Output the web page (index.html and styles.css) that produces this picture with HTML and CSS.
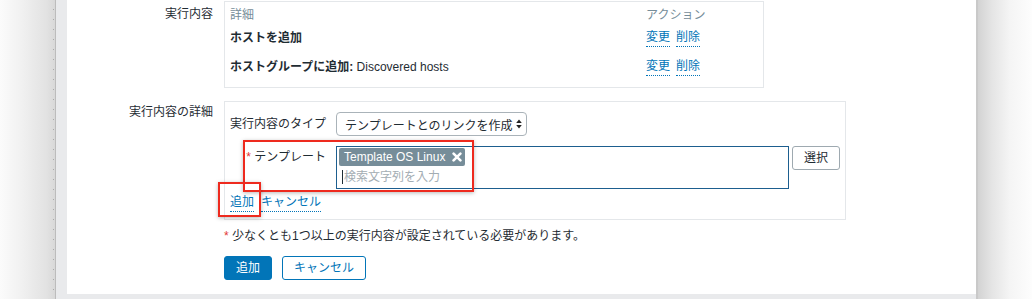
FILE: index.html
```html
<!DOCTYPE html>
<html lang="ja">
<head>
<meta charset="utf-8">
<title>実行内容</title>
<link rel="stylesheet" href="styles.css">
</head>
<body>
<div class="screen">
  <div class="shadow-left"></div>
  <div class="window">
    <div class="panel">
      <div class="form-row row-ops">
        <div class="label label-ops">実行内容</div>
        <div class="ops-box">
          <div class="ops-head">
            <span class="col-detail">詳細</span>
            <span class="col-action">アクション</span>
          </div>
          <div class="ops-row">
            <span class="col-detail"><b>ホストを追加</b></span>
            <span class="col-action"><a class="link" href="#">変更</a><a class="link" href="#">削除</a></span>
          </div>
          <div class="ops-row last">
            <span class="col-detail"><b>ホストグループに追加:</b> Discovered hosts</span>
            <span class="col-action"><a class="link" href="#">変更</a><a class="link" href="#">削除</a></span>
          </div>
        </div>
      </div>

      <div class="form-row row-detail">
        <div class="label label-detail">実行内容の詳細</div>
        <div class="detail-box">
          <div class="drow">
            <div class="dlabel">実行内容のタイプ</div>
            <div class="select">
              <span>テンプレートとのリンクを作成</span>
              <svg class="arrows" width="6" height="10" viewBox="0 0 6 10"><path d="M3 0.5 L5.8 4 L0.2 4 Z M3 9.5 L5.8 6 L0.2 6 Z" fill="#222"/></svg>
            </div>
          </div>
          <div class="drow tpl">
            <div class="dlabel"><span class="ast">*</span> テンプレート</div>
            <div class="ms">
              <span class="tag">Template OS Linux<svg class="tag-x" width="10" height="10" viewBox="0 0 10 10"><path d="M1.6 1.6 L8.4 8.4 M8.4 1.6 L1.6 8.4" stroke="#fff" stroke-width="2.6" stroke-linecap="round"/></svg></span>
              <div class="ms-input"><span class="caret"></span><span class="placeholder">検索文字列を入力</span></div>
            </div>
            <button class="btn-grey" type="button">選択</button>
          </div>
          <div class="dlinks">
            <a class="link" href="#">追加</a><a class="link" href="#">キャンセル</a>
          </div>
        </div>
      </div>

      <div class="form-row row-note">
        <div class="label"></div>
        <div class="note"><span class="ast">*</span> 少なくとも1つ以上の実行内容が設定されている必要があります。</div>
      </div>

      <div class="form-row row-buttons">
        <div class="label"></div>
        <div class="buttons">
          <button class="btn btn-primary" type="button">追加</button>
          <button class="btn btn-alt" type="button">キャンセル</button>
        </div>
      </div>

      <div class="annot annot-tpl"></div>
      <div class="annot annot-add"></div>
    </div>
  </div>
  <div class="shadow-right"></div>
</div>
</body>
</html>
```

FILE: styles.css
```css
* { box-sizing: border-box; }
html, body { margin: 0; padding: 0; }
body {
  width: 1032px;
  height: 299px;
  overflow: hidden;
  background: #fff;
  font-family: "Liberation Sans", "Noto Sans CJK JP", sans-serif;
  font-size: 12px;
  color: #1f2c33;
}
.screen { display: flex; height: 299px; }

.shadow-left {
  width: 55px;
  position: relative;
  background: linear-gradient(to right, #fbfbfb 0, #f2f2f2 35%, #e2e2e2 85%, #d8d8d8 100%);
}
.shadow-left::after {
  content: "";
  position: absolute;
  right: 1px;
  top: 0;
  bottom: 0;
  width: 1px;
  background: repeating-linear-gradient(to bottom, transparent 0 9px, #a9a9a9 9px 10px);
}
.shadow-right {
  width: 54px;
  background: linear-gradient(to right, #d3d3d3 0, #e4e4e4 25%, #f5f5f5 60%, #fdfdfd 100%);
}
.window {
  width: 923px;
  display: flex;
  flex-direction: column;
  background: #e9eaec;
  border-left: 1px solid #bcbcbc;
  border-right: 2px solid #c9c9c9;
  padding-left: 11px;
}
.panel {
  position: relative;
  height: 294px;
  background: #fff;
  padding-top: 1px;
}

.form-row {
  display: grid;
  grid-template-columns: 146px 1fr;
  column-gap: 11px;
  align-items: start;
}
.label { text-align: right; line-height: 18px; white-space: nowrap; }
.label-ops { padding-top: 4px; }
.label-detail { padding-top: 2px; }
.row-detail { margin-top: 13px; }
.row-note { margin-top: 7px; }
.row-buttons { margin-top: 11px; }

/* operations table */
.ops-box {
  width: 540px;
  border: 1px solid #e4e7ea;
}
.ops-head {
  display: flex;
  padding: 4px 5px 0;
  line-height: 18px;
  color: #768d99;
}
.ops-row {
  display: flex;
  padding: 5px 5px 3px;
  line-height: 18px;
}
.ops-row.last { padding: 8px 5px 11px; }
.col-detail { width: 416px; white-space: nowrap; }
.col-action { display: flex; align-items: flex-start; gap: 6px; white-space: nowrap; }
b { font-weight: bold; }

.link {
  display: inline-block;
  line-height: 17px;
  color: #0275b8;
  text-decoration: none;
  border-bottom: 1px dotted #0275b8;
}

/* details box */
.detail-box {
  width: 622px;
  border: 1px solid #e4e7ea;
  padding: 10px 5px 7px;
}
.drow { display: flex; align-items: center; }
.dlabel {
  width: 96px;
  margin-right: 10px;
  text-align: right;
  line-height: 18px;
  white-space: nowrap;
}
.ast { color: #e33734; }
.select {
  width: 191px;
  height: 24px;
  border: 1px solid #aab3b9;
  border-radius: 4px;
  padding: 0 4px 0 8px;
  display: flex;
  align-items: center;
  justify-content: space-between;
  background: #fff;
  white-space: nowrap;
}
.drow.tpl { align-items: flex-start; margin-top: 10px; }
.drow.tpl .dlabel { padding-top: 2px; }
.ms {
  width: 453px;
  height: 43px;
  border: 1px solid #1d5e8f;
  padding: 1px 2px;
  background: #fff;
}
.tag {
  display: inline-flex;
  align-items: center;
  gap: 7px;
  height: 18px;
  padding: 0 3px 0 5px;
  background: #768d99;
  color: #fff;
  border-radius: 2px;
  line-height: 18px;
  white-space: nowrap;
}
.tag-x { display: block; }
.ms-input {
  margin-top: 2px;
  height: 18px;
  display: flex;
  align-items: center;
  line-height: 18px;
}
.caret {
  width: 1px;
  height: 14px;
  margin-left: 3px;
  margin-right: 1px;
  background: #1f2c33;
}
.placeholder { color: #a3adb3; white-space: nowrap; }
.btn-grey {
  margin-left: 3px;
  height: 24px;
  padding: 0 11px;
  border: 1px solid #9ea9b0;
  border-radius: 3px;
  background: #fff;
  color: #1f2c33;
  font-family: inherit;
  font-size: 12px;
  line-height: 22px;
}
.dlinks {
  margin-top: 5px;
  display: flex;
  gap: 7px;
  height: 18px;
}

.note { line-height: 18px; white-space: nowrap; }

.buttons { display: flex; gap: 10px; }
.btn {
  height: 24px;
  padding: 0 11px;
  border-radius: 3px;
  font-family: inherit;
  font-size: 12px;
  line-height: 22px;
}
.btn-primary { background: #0275b8; border: 1px solid #0275b8; color: #fff; }
.btn-alt { background: #fff; border: 1px solid #0275b8; color: #0275b8; }

/* red annotation frames drawn over the screenshot */
.annot {
  position: absolute;
  border: 2px solid #ee2a1e;
  box-shadow: 0 1px 4px rgba(0, 0, 0, 0.28);
}
.annot-tpl { left: 176px; top: 140px; width: 231px; height: 52px; }
.annot-add { left: 151px; top: 182px; width: 43px; height: 35px; }
```
